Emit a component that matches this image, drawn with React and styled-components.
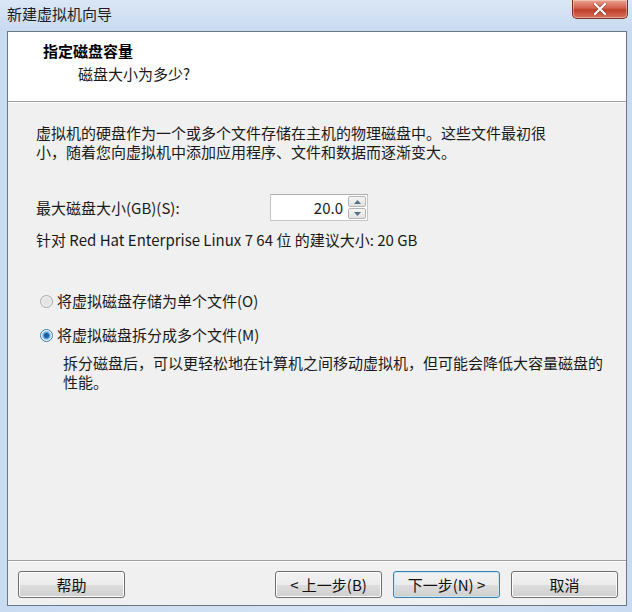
import React from "react";
import styled, { createGlobalStyle } from "styled-components";

const font = `"Noto Sans CJK SC", "Noto Sans", "Liberation Sans", sans-serif`;

const GlobalStyles = createGlobalStyle`
  html, body {
    margin: 0;
    padding: 0;
    background: #cfdff2;
  }
  * {
    box-sizing: border-box;
  }
`;

const Window = styled.div`
  width: 632px;
  height: 612px;
  display: flex;
  flex-direction: column;
  background: linear-gradient(to right, #c9dbf1, #d6e5f6 60%, #c9dbf1);
  font-family: ${font};
  font-size: 15px;
  color: #1a1a1a;
  overflow: hidden;
`;

const TitleBar = styled.div`
  height: 31px;
  display: flex;
  align-items: flex-start;
  justify-content: space-between;
  padding-left: 7px;
  background: linear-gradient(to bottom, #dbe7f5, #c8daf1);
`;

const Title = styled.span`
  margin-top: 4px;
  font-size: 15px;
  line-height: 20px;
  color: #1e1e1e;
`;

const CloseButton = styled.div`
  width: 56px;
  height: 19px;
  margin-right: 4px;
  border: 1px solid #7a3428;
  border-top: none;
  border-radius: 0 0 5px 5px;
  background: linear-gradient(to bottom, #e9a590, #d2604a 45%, #c0402a 55%, #d5735d);
  display: flex;
  align-items: center;
  justify-content: center;
  box-shadow: inset 0 0 0 1px rgba(255, 255, 255, 0.35);
`;

const Client = styled.div`
  flex: 1;
  margin: 0 5px 6px 7px;
  border: 1px solid #6c7786;
  display: flex;
  flex-direction: column;
  background: #f0f0f0;
`;

const Header = styled.div`
  height: 70px;
  background: #ffffff;
  border-bottom: 1px solid #a0a0a0;
  box-shadow: 0 1px 0 #ffffff;
  padding: 8px 0 0 35px;
`;

const HeaderTitle = styled.div`
  font-weight: bold;
  font-size: 15px;
  line-height: 22px;
  color: #000;
`;

const HeaderSub = styled.div`
  padding-left: 35px;
  margin-top: 1px;
  font-size: 15px;
  line-height: 22px;
  color: #1a1a1a;
`;

const Body = styled.div`
  flex: 1;
  padding: 21px 20px 0 28px;
  display: flex;
  flex-direction: column;
`;

const Paragraph = styled.p`
  margin: 0;
  line-height: 19px;
  padding-left: ${(p) => p.$indent || 0}px;
  margin-top: ${(p) => p.$top || 0}px;
`;

const SizeRow = styled.div`
  display: flex;
  align-items: center;
  margin-top: 33px;
  height: 27px;
`;

const SizeLabel = styled.span`
  width: 234px;
  line-height: 20px;
`;

const SpinBox = styled.div`
  display: flex;
  align-items: stretch;
  height: 27px;
  width: 98px;
  border: 1px solid #c6c6c6;
  border-top-color: #aeaeae;
  background: #fff;
`;

const SpinValue = styled.div`
  flex: 1;
  text-align: right;
  padding-right: 5px;
  line-height: 25px;
  font-size: 15px;
`;

const SpinButtons = styled.div`
  width: 19px;
  display: flex;
  flex-direction: column;
  padding: 1px 1px 1px 0;
  gap: 1px;
`;

const SpinArrow = styled.div`
  flex: 1;
  border: 1px solid #b4b4b4;
  border-radius: 2px;
  background: linear-gradient(to bottom, #f6f6f6, #e2e2e2);
  display: flex;
  align-items: center;
  justify-content: center;
`;

const Hint = styled.div`
  margin-top: 9px;
  line-height: 20px;
`;

const Options = styled.div`
  margin-top: 41px;
  display: flex;
  flex-direction: column;
  gap: 14px;
  padding-left: 4px;
`;

const RadioRow = styled.label`
  display: flex;
  align-items: center;
  gap: 4px;
  line-height: 20px;
`;

const RadioDot = styled.span`
  width: 13px;
  height: 13px;
  border-radius: 50%;
  border: 1px solid ${(p) => (p.$checked ? "#3c7fb1" : "#a8a8a8")};
  background: ${(p) =>
    p.$checked
      ? "radial-gradient(circle, #1f5f9e 0 2px, #4f9de0 3px, #a6cbea 4px, #eef4fa 5px)"
      : "radial-gradient(circle, #e4e4e4 0 3px, #f2f2f2 6px)"};
  flex-shrink: 0;
`;

const Footer = styled.div`
  height: 45px;
  border-top: 1px solid #a0a0a0;
  box-shadow: inset 0 1px 0 #ffffff;
  display: flex;
  align-items: flex-start;
  padding: 10px 8px 0 10px;
`;

const Button = styled.div`
  width: ${(p) => p.$w || 107}px;
  height: 27px;
  margin-left: ${(p) => p.$gap || 0}px;
  border: 1px solid ${(p) => (p.$focus ? "#3c7fb1" : "#707070")};
  border-radius: 3px;
  background: linear-gradient(to bottom, #f2f2f2 0%, #ebebeb 50%, #dddddd 51%, #cfcfcf 100%);
  box-shadow: inset 0 0 0 1px ${(p) => (p.$focus ? "#c8e6f7" : "#fcfcfc")};
  display: flex;
  align-items: center;
  justify-content: center;
  font-size: 15px;
  line-height: 20px;
  color: #111;
`;

const Spacer = styled.div`
  flex: 1;
`;

export default function App() {
  return (
    <>
      <GlobalStyles />
      <Window>
        <TitleBar>
          <Title>新建虚拟机向导</Title>
          <CloseButton>
            <svg width="14" height="12" viewBox="0 0 14 12">
              <path
                d="M2 1 L12 11 M12 1 L2 11"
                stroke="#5a1c10"
                strokeWidth="3.4"
                strokeLinecap="square"
                opacity="0.5"
              />
              <path
                d="M2 1 L12 11 M12 1 L2 11"
                stroke="#ffffff"
                strokeWidth="2.2"
                strokeLinecap="square"
              />
            </svg>
          </CloseButton>
        </TitleBar>
        <Client>
          <Header>
            <HeaderTitle>指定磁盘容量</HeaderTitle>
            <HeaderSub>磁盘大小为多少?</HeaderSub>
          </Header>
          <Body>
            <Paragraph>
              虚拟机的硬盘作为一个或多个文件存储在主机的物理磁盘中。这些文件最初很
              <br />
              小，随着您向虚拟机中添加应用程序、文件和数据而逐渐变大。
            </Paragraph>
            <SizeRow>
              <SizeLabel>最大磁盘大小(GB)(S):</SizeLabel>
              <SpinBox>
                <SpinValue>20.0</SpinValue>
                <SpinButtons>
                  <SpinArrow>
                    <svg width="7" height="4" viewBox="0 0 7 4">
                      <path d="M0 4 L3.5 0 L7 4 Z" fill="#5b6f86" />
                    </svg>
                  </SpinArrow>
                  <SpinArrow>
                    <svg width="7" height="4" viewBox="0 0 7 4">
                      <path d="M0 0 L3.5 4 L7 0 Z" fill="#5b6f86" />
                    </svg>
                  </SpinArrow>
                </SpinButtons>
              </SpinBox>
            </SizeRow>
            <Hint>针对 Red Hat Enterprise Linux 7 64 位 的建议大小: 20 GB</Hint>
            <Options>
              <RadioRow>
                <RadioDot />
                将虚拟磁盘存储为单个文件(O)
              </RadioRow>
              <RadioRow>
                <RadioDot $checked />
                将虚拟磁盘拆分成多个文件(M)
              </RadioRow>
            </Options>
            <Paragraph $indent={27} $top={8}>
              拆分磁盘后，可以更轻松地在计算机之间移动虚拟机，但可能会降低大容量磁盘的
              <br />
              性能。
            </Paragraph>
          </Body>
          <Footer>
            <Button>帮助</Button>
            <Spacer />
            <Button>&lt; 上一步(B)</Button>
            <Button $gap={11} $focus>
              下一步(N) &gt;
            </Button>
            <Button $gap={11}>取消</Button>
          </Footer>
        </Client>
      </Window>
    </>
  );
}
